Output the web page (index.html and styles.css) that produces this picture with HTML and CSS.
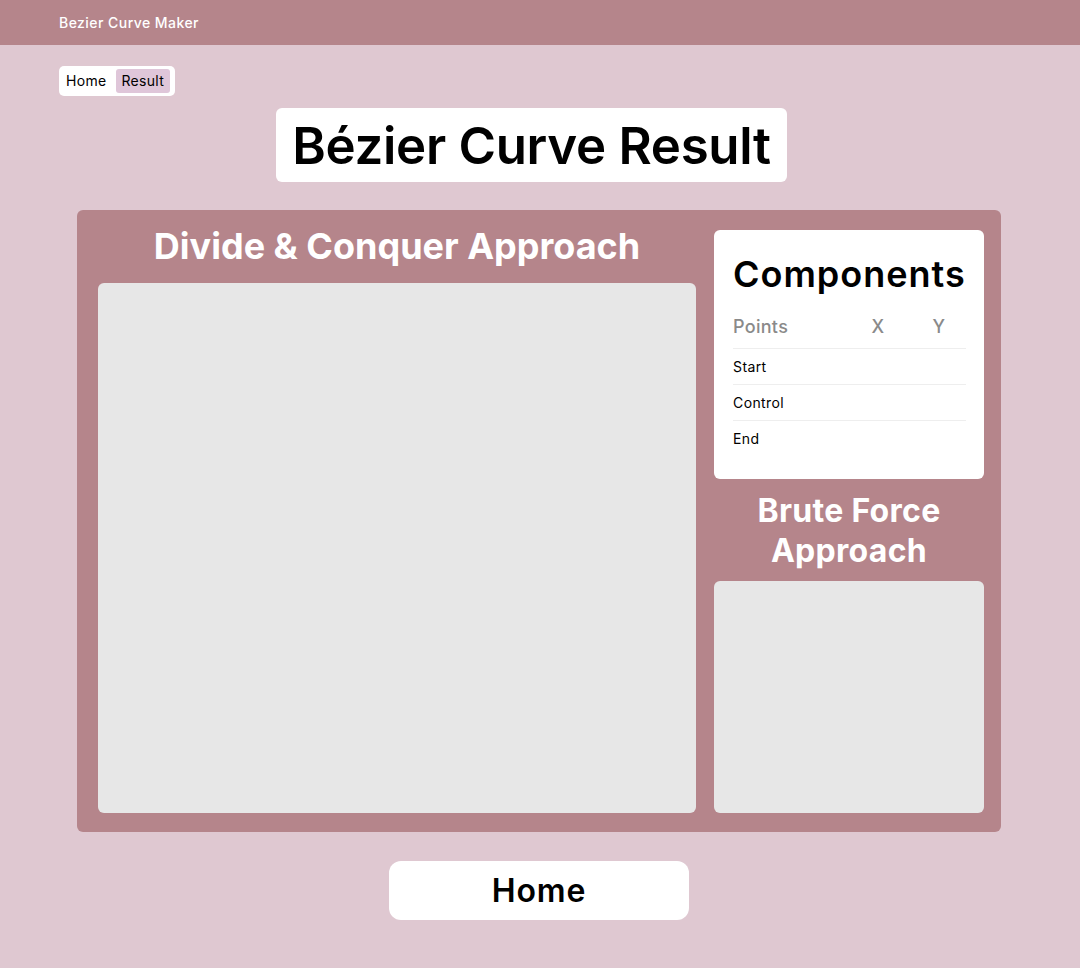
FILE: index.html
```html
<!DOCTYPE html>
<html lang="en">
<head>
<meta charset="utf-8">
<title>Bézier Curve Result</title>
<link rel="stylesheet" href="styles.css">
</head>
<body>
  <header class="topbar">
    <span class="brand">Bezier Curve Maker</span>
  </header>
  <main class="page">
    <nav class="crumbs">
      <span class="crumb">Home</span>
      <span class="crumb crumb-active">Result</span>
    </nav>
    <div class="title-row">
      <h1 class="title">Bézier Curve Result</h1>
    </div>
    <section class="panel">
      <div class="col-left">
        <h2 class="heading-dc">Divide &amp; Conquer Approach</h2>
        <div class="canvas canvas-main"></div>
      </div>
      <div class="col-right">
        <div class="card">
          <h3 class="card-title">Components</h3>
          <table class="points">
            <thead>
              <tr><th class="c-name">Points</th><th class="c-x">X</th><th class="c-y">Y</th></tr>
            </thead>
            <tbody>
              <tr><td>Start</td><td></td><td></td></tr>
              <tr><td>Control</td><td></td><td></td></tr>
              <tr class="last"><td>End</td><td></td><td></td></tr>
            </tbody>
          </table>
        </div>
        <h2 class="heading-bf">Brute Force<br>Approach</h2>
        <div class="canvas canvas-side"></div>
      </div>
    </section>
    <div class="btn-row">
      <button class="home-btn">Home</button>
    </div>
  </main>
</body>
</html>
```
FILE: styles.css
```css
* { box-sizing: border-box; }
html, body { margin: 0; padding: 0; }
body {
  background: #dfc8d1;
  font-family: Inter, "Noto Sans", sans-serif;
  color: #000;
  width: 1080px;
  height: 968px;
  overflow: hidden;
}
.topbar {
  height: 45px;
  background: #b5858b;
  display: flex;
  align-items: center;
  padding-left: 59px;
}
.brand {
  color: #fff;
  font-size: 14px;
  font-weight: 500;
  letter-spacing: 0.45px;
}
.page {
  padding: 21px 0 0 0;
}
.crumbs {
  margin-left: 59px;
  display: inline-flex;
  align-items: center;
  gap: 2px;
  background: #fff;
  border-radius: 5px;
  padding: 3px;
  height: 30px;
  width: 116px;
}
.crumb {
  font-size: 14px;
  letter-spacing: 0.3px;
  padding: 3px 5px 3px 4px;
  border-radius: 3px;
  line-height: 18px;
}
.crumb-active {
  margin-left: 3px;
  padding: 3px 6px 3px 5px;
  background: #dfc6d9;
}
.title-row {
  display: flex;
  justify-content: center;
  margin-top: 12px;
  padding-right: 17px;
}
.title {
  margin: 0;
  background: #fff;
  border-radius: 6px;
  height: 74px;
  padding: 0 16px;
  display: flex;
  align-items: center;
  white-space: nowrap;
  font-size: 51px;
  font-weight: 600;
  letter-spacing: -0.3px;
}
.panel {
  margin: 28px 0 0 77px;
  width: 924px;
  height: 622px;
  background: #b5858b;
  border-radius: 6px;
  padding: 20px 17px 19px 21px;
  display: flex;
  gap: 18px;
}
.col-left {
  width: 598px;
  display: flex;
  flex-direction: column;
}
.heading-dc {
  margin: -6px 0 15px 0;
  color: #fff;
  font-size: 36px;
  font-weight: 700;
  line-height: 44px;
  text-align: center;
  letter-spacing: 0;
}
.canvas {
  background: #e7e7e7;
  border-radius: 6px;
}
.canvas-main { flex: 1; }
.col-right {
  width: 270px;
  display: flex;
  flex-direction: column;
}
.card {
  background: #fff;
  border-radius: 6px;
  height: 249px;
  padding: 22px 18px 0 19px;
}
.card-title {
  margin: 0 0 19px 0;
  font-size: 36px;
  font-weight: 600;
  line-height: 44px;
  letter-spacing: 1px;
  white-space: nowrap;
}
.points {
  width: 100%;
  border-collapse: collapse;
}
.points th {
  color: #8a8a8a;
  font-size: 18px;
  font-weight: 500;
  letter-spacing: 0.3px;
  height: 33px;
  padding: 0;
  vertical-align: top;
  line-height: 24px;
  border-bottom: 1px solid #eeeeee;
}
.points th.c-name { text-align: left; }
.points th.c-x { width: 60px; text-align: center; padding-left: 4px; }
.points th.c-y { width: 60px; text-align: center; padding-left: 6px; }
.points td {
  font-size: 14px;
  letter-spacing: 0.4px;
  height: 36px;
  padding: 0;
  border-bottom: 1px solid #eeeeee;
}
.points tr.last td { border-bottom: none; }
.heading-bf {
  margin: 12px 0 10px 0;
  color: #fff;
  font-size: 32px;
  font-weight: 700;
  line-height: 40px;
  text-align: center;
  letter-spacing: 0.3px;
}
.canvas-side { flex: 1; }
.btn-row {
  display: flex;
  justify-content: center;
  margin-top: 29px;
  padding-right: 2px;
}
.home-btn {
  width: 300px;
  height: 59px;
  background: #fff;
  border: none;
  border-radius: 12px;
  font-family: Inter, "Noto Sans", sans-serif;
  font-size: 32px;
  font-weight: 600;
  letter-spacing: 0.8px;
  color: #000;
  padding: 0;
}
```
